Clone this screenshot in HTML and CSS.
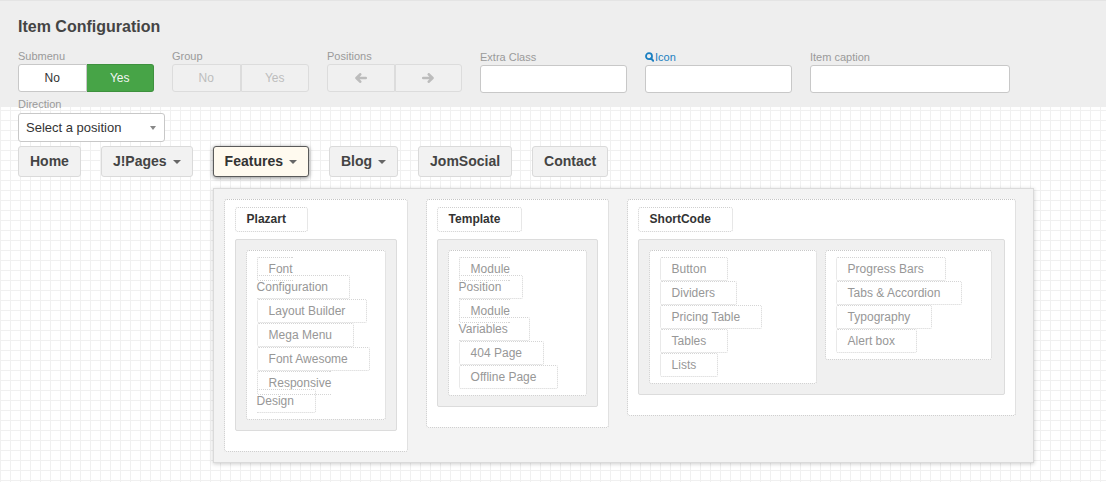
FILE: index.html
```html
<!DOCTYPE html>
<html lang="en">
<head>
<meta charset="utf-8">
<title>Item Configuration</title>
<link rel="stylesheet" href="styles.css">
</head>
<body>
<div class="config">
  <h1 class="title">Item Configuration</h1>
  <div class="fields">
    <div class="field w-submenu">
      <label class="lbl">Submenu</label>
      <div class="btn-group">
        <span class="btn btn-first">No</span><span class="btn btn-last btn-success">Yes</span>
      </div>
    </div>
    <div class="field w-group">
      <label class="lbl">Group</label>
      <div class="btn-group">
        <span class="btn btn-first btn-disabled">No</span><span class="btn btn-last btn-disabled">Yes</span>
      </div>
    </div>
    <div class="field w-pos">
      <label class="lbl">Positions</label>
      <div class="btn-group">
        <span class="btn btn-first btn-disabled">
          <svg class="arrow" width="12" height="10" viewBox="0 0 12 10"><path d="M5.2 1.3 L1.5 5 L5.2 8.7 M1.6 5 H10.8"/></svg>
        </span><span class="btn btn-last btn-disabled">
          <svg class="arrow" width="12" height="10" viewBox="0 0 12 10"><path d="M6.8 1.3 L10.5 5 L6.8 8.7 M10.4 5 H1.2"/></svg>
        </span>
      </div>
    </div>
    <div class="field field-text w-text">
      <label class="lbl">Extra Class</label>
      <div class="input"></div>
    </div>
    <div class="field field-text w-text">
      <label class="lbl lbl-link"><svg class="search" width="9" height="10" viewBox="0 0 9 10"><circle cx="4" cy="4.2" r="3" fill="none" stroke="currentColor" stroke-width="1.8"/><path d="M6 6.4 L8.2 8.8" stroke="currentColor" stroke-width="2" stroke-linecap="round"/></svg>Icon</label>
      <div class="input"></div>
    </div>
    <div class="field field-text w-caption">
      <label class="lbl">Item caption</label>
      <div class="input"></div>
    </div>
  </div>
  <div class="field direction">
    <label class="lbl lbl-dir">Direction</label>
    <div class="select"><span>Select a position</span><span class="select-caret"></span></div>
  </div>
</div>

<ul class="menu">
  <li class="menu-item">Home</li>
  <li class="menu-item">J!Pages<span class="caret"></span></li>
  <li class="menu-item active">Features<span class="caret"></span>
    <div class="mega">
      <div class="col col-plazart">
        <div class="col-head">Plazart</div>
        <div class="col-body">
          <div class="sub">
            <ul class="items">
              <li><span class="item">Font Configuration</span></li>
              <li><span class="item">Layout Builder</span></li>
              <li><span class="item">Mega Menu</span></li>
              <li><span class="item">Font Awesome</span></li>
              <li><span class="item">Responsive Design</span></li>
            </ul>
          </div>
        </div>
      </div>
      <div class="col col-template">
        <div class="col-head">Template</div>
        <div class="col-body">
          <div class="sub">
            <ul class="items">
              <li><span class="item">Module Position</span></li>
              <li><span class="item">Module Variables</span></li>
              <li><span class="item">404 Page</span></li>
              <li><span class="item">Offline Page</span></li>
            </ul>
          </div>
        </div>
      </div>
      <div class="col col-short">
        <div class="col-head">ShortCode</div>
        <div class="col-body">
          <div class="sub-grid">
            <div class="sub sub-left">
              <ul class="items">
                <li><span class="item">Button</span></li>
                <li><span class="item">Dividers</span></li>
                <li><span class="item">Pricing Table</span></li>
                <li><span class="item">Tables</span></li>
                <li><span class="item">Lists</span></li>
              </ul>
            </div>
            <div class="sub sub-right">
              <ul class="items">
                <li><span class="item">Progress Bars</span></li>
                <li><span class="item">Tabs &amp; Accordion</span></li>
                <li><span class="item">Typography</span></li>
                <li><span class="item">Alert box</span></li>
              </ul>
            </div>
          </div>
        </div>
      </div>
    </div>
  </li>
  <li class="menu-item">Blog<span class="caret"></span></li>
  <li class="menu-item">JomSocial</li>
  <li class="menu-item">Contact</li>
</ul>
</body>
</html>
```

FILE: styles.css
```css
html, body {
  margin: 0;
  padding: 0;
}

body {
  font-family: "Liberation Sans", Arial, sans-serif;
  color: #333;
  min-height: 482px;
  background-color: #fff;
  background-image:
    linear-gradient(#e4e4e4, #e4e4e4),
    linear-gradient(#eeeeee, #eeeeee),
    linear-gradient(to right, #f0f0f0 1px, transparent 1px),
    linear-gradient(to bottom, #f0f0f0 1px, transparent 1px);
  background-size: 100% 1px, 100% 107px, 10px 10px, 10px 10px;
  background-repeat: no-repeat, no-repeat, repeat, repeat;
  background-position: 0 0, 0 0, 0 0, 0 0;
}

/* ---------- configuration header ---------- */
.config {
  padding: 17px 18px 0;
}

.title {
  margin: 0;
  font-size: 16px;
  line-height: 20px;
  font-weight: bold;
  color: #444;
}

.fields {
  display: flex;
  align-items: flex-start;
  gap: 18px;
  margin-top: 12px;
}

.w-submenu { width: 136px; }
.w-group { width: 137px; }
.w-pos { width: 135px; }
.w-text { width: 147px; }
.w-caption { width: 200px; }

.lbl {
  display: block;
  font-size: 11px;
  line-height: 14px;
  color: #9a9a9a;
  margin-bottom: 1px;
}

.lbl-link {
  color: #1a7fc1;
  display: flex;
  align-items: center;
}

.search {
  margin-right: 1px;
  color: #1a7fc1;
}

.field-text {
  padding-top: 1px;
}

.field-text .input {
  margin-top: 1px;
}

.btn-group {
  display: flex;
  height: 28px;
}

.btn {
  flex: 1;
  display: flex;
  align-items: center;
  justify-content: center;
  box-sizing: border-box;
  font-size: 12px;
  color: #333;
  background: #fff;
  border: 1px solid #c8c8c8;
}

.btn-first {
  border-radius: 3px 0 0 3px;
}

.btn-last {
  border-radius: 0 3px 3px 0;
  border-left: none;
}

.btn-success {
  background: #47a447;
  border-color: #3e913e;
  color: #f4f4f4;
}

.btn-disabled {
  background: #f0f0f0;
  border-color: #dcdcdc;
  color: #bdbdbd;
}

.btn-last.btn-disabled {
  border-left: 1px solid #dcdcdc;
}

.arrow {
  fill: none;
  stroke: #bcbcbc;
  stroke-width: 2.6;
  stroke-linecap: round;
  stroke-linejoin: round;
}

.input {
  height: 28px;
  box-sizing: border-box;
  background: #fff;
  border: 1px solid #c8c8c8;
  border-radius: 3px;
}

.direction {
  width: 147px;
  margin-top: 4px;
}

.lbl-dir {
  margin-bottom: 2px;
}

.select {
  height: 29px;
  box-sizing: border-box;
  display: flex;
  align-items: center;
  justify-content: space-between;
  padding: 0 8px 0 7px;
  background: #fff;
  border: 1px solid #c8c8c8;
  border-radius: 3px;
  font-size: 13px;
  color: #333;
}

.select-caret {
  width: 0;
  height: 0;
  border-top: 4px solid #888;
  border-left: 3.5px solid transparent;
  border-right: 3.5px solid transparent;
  margin-top: 1px;
}

/* ---------- menu ---------- */
.menu {
  list-style: none;
  margin: 4px 0 0;
  padding: 0 18px;
  display: flex;
  gap: 20px;
}

.menu-item {
  position: relative;
  height: 31px;
  box-sizing: border-box;
  padding: 0 11px;
  line-height: 29px;
  font-size: 14px;
  font-weight: bold;
  color: #444;
  background: #f2f2f2;
  border: 1px solid #dadada;
  border-radius: 3px;
  white-space: nowrap;
}

.menu-item.active {
  background: #fffaef;
  border-color: #5a5a5a;
  color: #333;
  box-shadow: 0 1px 4px rgba(0, 0, 0, 0.45);
}

.caret {
  display: inline-block;
  width: 0;
  height: 0;
  margin-left: 6px;
  vertical-align: middle;
  border-top: 4px solid #666;
  border-left: 4px solid transparent;
  border-right: 4px solid transparent;
}

/* ---------- mega dropdown ---------- */
.mega {
  position: absolute;
  top: 41px;
  left: -1px;
  width: 821px;
  box-sizing: border-box;
  padding: 10px;
  display: flex;
  align-items: flex-start;
  gap: 18px;
  background: #f3f3f3;
  border: 1px solid #dadada;
  box-shadow: 0 1px 4px rgba(0, 0, 0, 0.2);
  font-weight: normal;
  line-height: normal;
  white-space: normal;
  z-index: 2;
}

.col {
  box-sizing: border-box;
  background: #fff;
  border: 1px dotted #c4c4c4;
  border-radius: 3px;
  padding: 7px 10px 20px;
}

.col-plazart { width: 184px; }
.col-template { width: 183px; }
.col-short { width: 389px; }

.col-head {
  width: max-content;
  padding: 0 21px 0 11px;
  line-height: 23px;
  font-size: 12px;
  font-weight: bold;
  color: #333;
  border: 1px dotted #cfcfcf;
  border-radius: 3px;
}

.col-body {
  margin-top: 7px;
  padding: 10px;
  background: #f0f0f0;
  border: 1px solid #dcdcdc;
  border-radius: 2px;
}

.sub {
  box-sizing: border-box;
  background: #fff;
  border: 1px dotted #c8c8c8;
  border-radius: 3px;
  padding: 6px 12px 6px 10px;
}

.sub-grid {
  display: flex;
  align-items: flex-start;
  gap: 8px;
}

.sub-left { width: 168px; }
.sub-right { width: 167px; }

.items {
  list-style: none;
  margin: 0;
  padding: 0;
}

.items li {
  padding: 3px 0;
  font-size: 12px;
  line-height: 18px;
}

.item {
  padding: 4px 21px 4px 11px;
  border: 1px dotted #d4d4d4;
  border-radius: 2px;
  color: #979797;
}
```
